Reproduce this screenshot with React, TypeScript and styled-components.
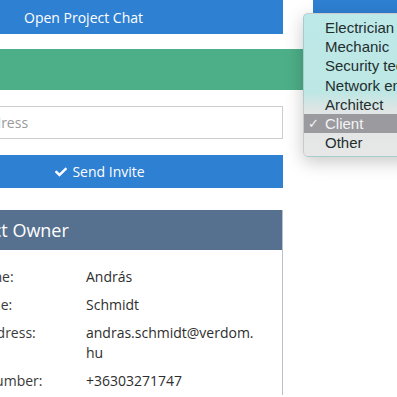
import React from 'react';
import styled, { createGlobalStyle } from 'styled-components';
import { FaCheck } from 'react-icons/fa';

const GlobalStyle = createGlobalStyle`
  html, body {
    margin: 0;
    padding: 0;
    background: #fff;
    overflow: hidden;
  }
  body {
    font-family: 'Open Sans', 'Liberation Sans', sans-serif;
    color: #333;
  }
`;

const roles = [
  'Electrician',
  'Mechanic',
  'Security technician',
  'Network engineer',
  'Architect',
  'Client',
  'Other',
];

const owner = [
  { label: 'First name:', value: 'András' },
  { label: 'Last name:', value: 'Schmidt' },
  { label: 'Email address:', value: <>andras.schmidt@verdom.<wbr />hu</> },
  { label: 'Phone number:', value: '+36303271747' },
];

const App = () => {
  return (
    <Page>
      <GlobalStyle />
      <TopRow>
        <ChatButton>Open Project Chat</ChatButton>
        <SideButton />
      </TopRow>

      <GreenBar />

      <Column>
        <EmailInput placeholder="Email address" />
        <InviteButton>
          <FaCheck size={12} />
          Send Invite
        </InviteButton>

        <Card>
          <CardHeader>Project Owner</CardHeader>
          <CardBody>
            {owner.map((row) => (
              <InfoRow key={row.label}>
                <Label>{row.label}</Label>
                <Value>{row.value}</Value>
              </InfoRow>
            ))}
          </CardBody>
        </Card>
      </Column>

      <Menu>
        {roles.map((role) => (
          <MenuItem key={role} selected={role === 'Client'}>
            {role === 'Client' && <Tick>✓</Tick>}
            {role}
          </MenuItem>
        ))}
      </Menu>
    </Page>
  );
};

const Page = styled.div`
  position: relative;
  width: 397px;
  height: 397px;
  overflow: hidden;
`;

const TopRow = styled.div`
  display: flex;
  gap: 30px;
`;

const ChatButton = styled.div`
  margin-left: -83px;
  width: 366px;
  height: 34px;
  box-sizing: border-box;
  padding-left: 107px;
  display: flex;
  align-items: center;
  background: #2e80d3;
  color: #fff;
  font-size: 14px;
`;

const SideButton = styled.div`
  flex: 1;
  height: 34px;
  background: #2e80d3;
`;

const GreenBar = styled.div`
  margin-top: 15px;
  height: 41px;
  background: #4daf88;
`;

const Column = styled.div`
  margin-left: -83px;
  width: 366px;
  padding-top: 16px;
  display: flex;
  flex-direction: column;
`;

const EmailInput = styled.input`
  height: 33px;
  box-sizing: border-box;
  border: 1px solid #ccc;
  padding: 0 0 0 19px;
  font-family: inherit;
  font-size: 14px;
  color: #555;
  outline: none;

  &::placeholder {
    color: #999;
  }
`;

const InviteButton = styled.div`
  margin-top: 16px;
  height: 33px;
  display: flex;
  align-items: center;
  justify-content: center;
  gap: 5px;
  background: #2e80d3;
  color: #fff;
  font-size: 14px;
`;

const Card = styled.div`
  margin-top: 22px;
  border: 1px solid #b9c0ca;
  border-top: none;
  border-bottom: none;
`;

const CardHeader = styled.div`
  height: 40px;
  display: flex;
  align-items: center;
  padding-left: 31px;
  background: #56708f;
  color: #fff;
  font-size: 18px;
`;

const CardBody = styled.div`
  padding: 13px 14px 0 23px;
  background: #fff;
`;

const InfoRow = styled.div`
  display: grid;
  grid-template-columns: 145px 1fr;
  padding: 4px 0;
  font-size: 14px;
  line-height: 20px;
`;

const Label = styled.div`
  color: #3a3a3a;
  white-space: nowrap;
`;

const Value = styled.div`
  color: #2e2e2e;
`;

const Menu = styled.div`
  position: absolute;
  top: 13px;
  left: 303px;
  width: 140px;
  padding: 4px 0;
  border: 1px solid rgba(0, 0, 0, 0.12);
  border-radius: 5px;
  background: linear-gradient(
    180deg,
    #bde9e9 0%,
    #bde7e4 55%,
    #e1e5e5 68%,
    #e7e7e7 100%
  );
  box-shadow: 0 5px 18px rgba(0, 0, 0, 0.22);
  font-family: 'Liberation Sans', Arial, sans-serif;
  font-size: 15px;
`;

const MenuItem = styled.div<{ selected?: boolean }>`
  position: relative;
  height: 19.2px;
  line-height: 19.2px;
  padding-left: 21px;
  white-space: nowrap;
  color: ${(p) => (p.selected ? '#f4f4f4' : '#1f2f2f')};
  background: ${(p) => (p.selected ? '#9a9a9f' : 'transparent')};
`;

const Tick = styled.span`
  position: absolute;
  left: 4px;
  font-size: 13px;
`;

export default App;
